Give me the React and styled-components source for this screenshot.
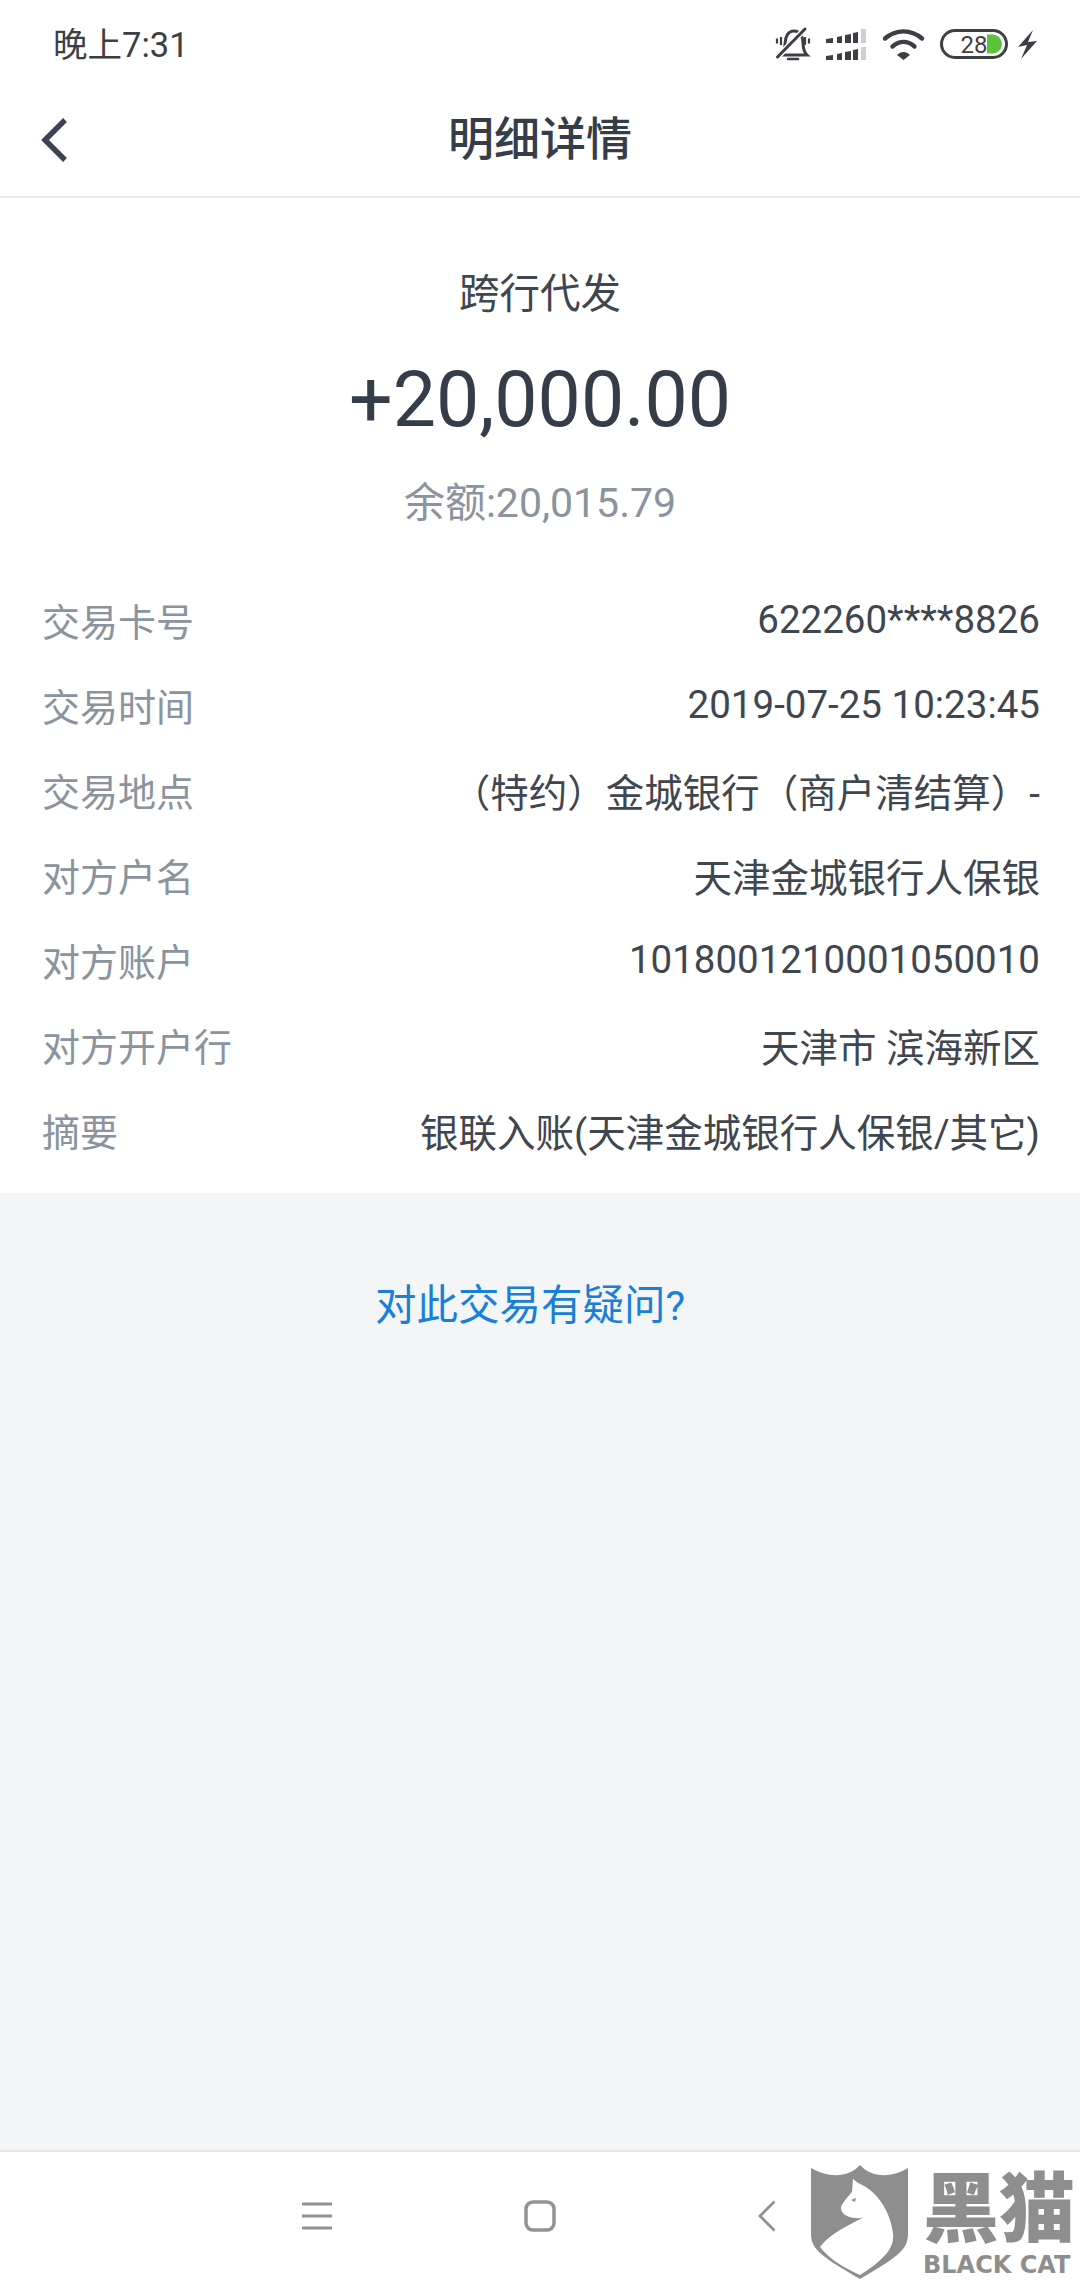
import React from "react";
import styled, { createGlobalStyle } from "styled-components";

const Global = createGlobalStyle`
  html, body { margin: 0; padding: 0; background: #fff; }
  body { font-family: Roboto, "Noto Sans CJK SC", sans-serif; }
`;

const Screen = styled.div`
  width: 1080px;
  height: 2280px;
  display: flex;
  flex-direction: column;
  overflow: hidden;
  position: relative;
  background: #f3f5f7;
`;

const StatusBar = styled.div`
  height: 90px;
  flex: none;
  background: #fff;
  display: flex;
  align-items: center;
  justify-content: space-between;
  padding: 0 0 0 53px;
`;

const Clock = styled.div`
  font-size: 34.5px;
  color: #3c3f44;
  line-height: 1;
`;

const StatusIcons = styled.div`
  display: flex;
  align-items: center;
  height: 40px;
  width: 340px;
  flex: none;
`;

const NavBar = styled.header`
  height: 108px;
  flex: none;
  box-sizing: border-box;
  background: #fff;
  border-bottom: 2px solid #e8e9eb;
  display: grid;
  grid-template-columns: 108px 1fr 108px;
  align-items: center;
`;

const BackButton = styled.div`
  display: flex;
  padding-left: 40px;
  position: relative;
  top: -3px;
`;

const Title = styled.h1`
  margin: 0;
  text-align: center;
  font-size: 46px;
  font-weight: 500;
  color: #353d49;
  line-height: 1;
  position: relative;
  top: -4px;
`;

const Detail = styled.section`
  flex: none;
  height: 995px;
  background: #fff;
  display: flex;
  flex-direction: column;
  box-sizing: border-box;
  padding-top: 71px;
`;

const Kind = styled.div`
  font-size: 40.5px;
  line-height: 50px;
  color: #3f4650;
  text-align: center;
`;

const Amount = styled.div`
  font-size: 77px;
  line-height: 90px;
  margin-top: 36px;
  color: #353d49;
  text-align: center;
`;

const Balance = styled.div`
  font-size: 41px;
  line-height: 50px;
  margin-top: 33px;
  color: #8a939e;
  text-align: center;
`;

const Rows = styled.dl`
  margin: 49px 0 0;
  padding: 0 40px 0 42px;
  display: flex;
  flex-direction: column;
`;

const Row = styled.div`
  height: 85px;
  display: flex;
  justify-content: space-between;
  align-items: center;
`;

const Label = styled.dt`
  font-size: 38px;
  color: #8a939e;
`;

const Value = styled.dd`
  margin: 0;
  font-size: 38.5px;
  color: #3f4650;
`;

const Help = styled.a`
  display: block;
  margin-top: 86px;
  padding-left: 375px;
  font-size: 41.5px;
  line-height: 54px;
  color: #1a7fd6;
`;

const SoftKeys = styled.nav`
  margin-top: auto;
  height: 130px;
  flex: none;
  box-sizing: border-box;
  background: #fff;
  border-top: 2px solid #e6e7e9;
  display: flex;
  align-items: center;
  padding-left: 302px;
`;

const SoftKey = styled.div`
  display: flex;
  margin-left: ${(p) => p.$offset}px;
`;

const Mark = styled.div`
  position: absolute;
  left: 811px;
  top: 2165px;
  display: flex;
  align-items: flex-start;
  gap: 15px;
  color: #8e8e8e;
`;

const MarkText = styled.div`
  display: flex;
  flex-direction: column;
  padding-top: 8px;
`;

const MarkName = styled.div`
  font-size: 76px;
  line-height: 74px;
  height: 74px;
  font-weight: 900;
  white-space: nowrap;
`;

const MarkLatin = styled.div`
  margin-top: 5px;
  font-family: "DejaVu Sans", sans-serif;
  font-size: 24px;
  line-height: 26px;
  font-weight: 700;
  white-space: nowrap;
`;

const rows = [
  ["交易卡号", "622260****8826"],
  ["交易时间", "2019-07-25 10:23:45"],
  ["交易地点", "（特约）金城银行（商户清结算）-"],
  ["对方户名", "天津金城银行人保银"],
  ["对方账户", "1018001210001050010"],
  ["对方开户行", "天津市 滨海新区"],
  ["摘要", "银联入账(天津金城银行人保银/其它)"],
];

const StatusGlyphs = () => (
  <svg width="340" height="40" viewBox="0 0 340 40" fill="none">
    {/* muted bell */}
    <g stroke="#3c3f44" strokeLinecap="round">
      <path d="M41 30c3-3 4-6 4-11 0-7 3-13 9-13s9 6 9 12c0 5 1 9 4 12z" strokeWidth="3" />
      <path d="M48 34h10" strokeWidth="2.500" />
      <path d="M37.500 32L65 4" stroke="#fff" strokeWidth="6" />
      <path d="M37.500 32L65 4" strokeWidth="3" />
      <path d="M41 12v8M37 13.500v5M65 12v8M69 13.500v5" strokeWidth="2.200" strokeLinecap="butt" />
    </g>
    {/* dual SIM signal bars */}
    <g fill="#3c3f44">
      <path d="M86 14l7-1v5h-7zM97 12l5-1v7h-5zM105 10l6-1v9h-6zM113 8l5-1v11h-5z" />
      <path d="M86 31l7-1v5h-7zM97 29l5-1v7h-5zM105 27l6-1v9h-6zM113 25l5-1v11h-5z" />
    </g>
    <rect x="121" y="4" width="5" height="14" fill="#cfcfcf" />
    <rect x="121" y="22" width="5" height="13" fill="#cfcfcf" />
    {/* wifi */}
    <g stroke="#3c3f44" strokeWidth="4.400" fill="none" strokeLinecap="round">
      <path d="M145 13.500c11-9.500 26-9.500 37 0" />
      <path d="M152.500 21.500c7-6 15-6 22 0" />
    </g>
    <path d="M157 30c4-4 9-4 13 0l-6.500 5z" fill="#3c3f44" />
    {/* battery level */}
    <rect x="201.500" y="5.500" width="65" height="27" rx="13.500" stroke="#3c3f44" strokeWidth="3" />
    <path d="M247 9.500h5.500a9.500 9.500 0 0 1 0 19H247z" fill="#5cc23a" />
    <text x="234" y="28" textAnchor="middle" fontFamily="Roboto, sans-serif" fontSize="24" fill="#3c3f44">28</text>
    {/* charging bolt */}
    <path d="M293 5L278 22l9-2-6 14 16-18-9 1z" fill="#3c3f44" />
  </svg>
);

const BackChevron = () => (
  <svg width="30" height="46" viewBox="0 0 30 46" fill="none">
    <path d="M25 3L5 23l20 20" stroke="#3a434f" strokeWidth="5.500" />
  </svg>
);

const MenuKey = () => (
  <svg width="30" height="28" viewBox="0 0 30 28" fill="none">
    <path d="M1 2h28M1 14h28M1 26h28" stroke="#929292" strokeWidth="3" strokeLinecap="round" />
  </svg>
);

const HomeKey = () => (
  <svg width="32" height="32" viewBox="0 0 32 32" fill="none">
    <rect x="2" y="2" width="28" height="28" rx="7" stroke="#929292" strokeWidth="3.500" />
  </svg>
);

const BackKey = () => (
  <svg width="18" height="32" viewBox="0 0 18 32" fill="none">
    <path d="M16.500 1.500L2 16l14.500 14.500" stroke="#929292" strokeWidth="2.800" />
  </svg>
);

const CatShield = () => (
  <svg width="97" height="115" viewBox="0 0 97 115">
    <path d="M0 3c20 11 38 9 49-3 11 12 29 14 48 3v65c0 16-7 22-48 46C8 90 0 84 0 68z" fill="#8e8e8e" />
    <path d="M42 14l5 4c18 7 32 27 35 50 1 8-2 15-6 20-8 9-17 16-27 22C36 104 20 96 9 82c10-14 30-22 44-30-4 2-12 2-19-2-3-2-4-5-4-7 0-3 4-8 11-16z" fill="#fff" />
    <path d="M40 35l5-2-1 4z" fill="#8e8e8e" />
  </svg>
);

export default function App() {
  return (
    <Screen>
      <Global />
      <StatusBar>
        <Clock>晚上7:31</Clock>
        <StatusIcons>
          <StatusGlyphs />
        </StatusIcons>
      </StatusBar>
      <NavBar>
        <BackButton>
          <BackChevron />
        </BackButton>
        <Title>明细详情</Title>
        <span />
      </NavBar>
      <Detail>
        <Kind>跨行代发</Kind>
        <Amount>+20,000.00</Amount>
        <Balance>余额:20,015.79</Balance>
        <Rows>
          {rows.map(([label, value]) => (
            <Row key={label}>
              <Label>{label}</Label>
              <Value>{value}</Value>
            </Row>
          ))}
        </Rows>
      </Detail>
      <Help>对此交易有疑问?</Help>
      <SoftKeys>
        <SoftKey $offset={0}>
          <MenuKey />
        </SoftKey>
        <SoftKey $offset={192}>
          <HomeKey />
        </SoftKey>
        <SoftKey $offset={202}>
          <BackKey />
        </SoftKey>
      </SoftKeys>
      <Mark>
        <CatShield />
        <MarkText>
          <MarkName>黑猫</MarkName>
          <MarkLatin>BLACK CAT</MarkLatin>
        </MarkText>
      </Mark>
    </Screen>
  );
}
